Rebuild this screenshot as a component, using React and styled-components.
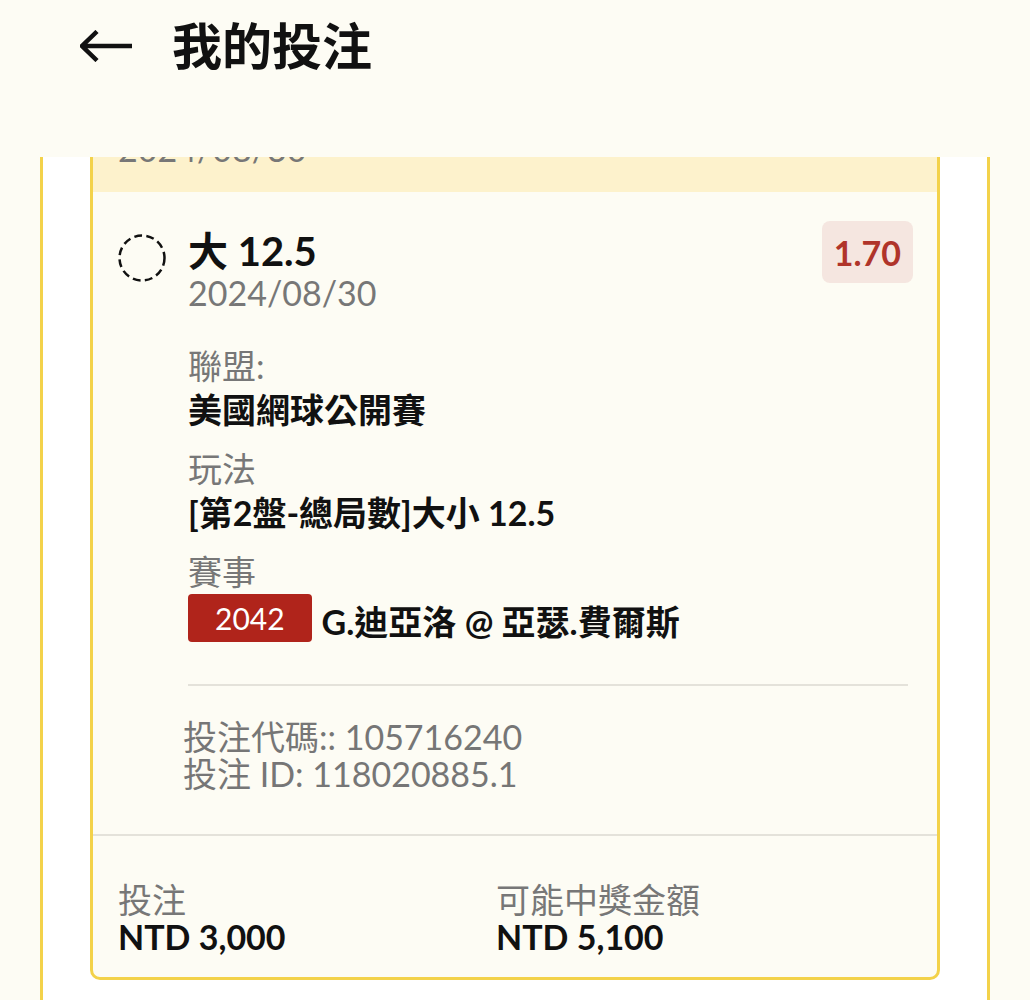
import React from 'react';
import styled, { createGlobalStyle } from 'styled-components';

const GlobalStyle = createGlobalStyle`
    body {
        margin: 0;
        background: #fdfcf4;
        font-family: Lato, "Noto Sans CJK TC", sans-serif;
    }
`;

const Header = styled.header`
    height: 157px;
    box-sizing: border-box;
    padding-left: 80px;
    background: #fdfcf4;
`;

const HeaderRow = styled.div`
    height: 92px;
    display: flex;
    align-items: center;
    gap: 40px;
`;

const BackButton = styled.button`
    border: 0;
    background: none;
    padding: 0;
    width: 52px;
    height: 32px;
    display: flex;
    cursor: pointer;
`;

const Title = styled.h1`
    margin: 0;
    font-size: 50px;
    font-weight: 700;
    line-height: 92px;
    color: #111;
`;

const Viewport = styled.main`
    height: 843px;
    overflow: hidden;
`;

const Panel = styled.section`
    margin: -81px 40px 0;
    background: #fff;
    border: 3px solid #f3d24a;
    padding: 30px 47px;
`;

const Card = styled.article`
    border: 3px solid #f3d24a;
    border-radius: 10px;
    background: #fdfcf4;
    overflow: hidden;
`;

const CardHead = styled.div`
    background: #fdf2cc;
    padding: 16px 25px 22px;
    font-size: 34px;
    line-height: 42px;
    color: #777;
`;

const CardBody = styled.div`
    padding: 29px 24px 42px 25px;
`;

const TopRow = styled.div`
    display: flex;
    align-items: flex-start;
`;

const Radio = styled.div`
    width: 48px;
    height: 48px;
    flex-shrink: 0;
    margin: 13px 22px 0 0;
    display: flex;
`;

const Selection = styled.div`
    flex: 1;
    margin-top: 7px;
`;

const Pick = styled.div`
    font-size: 40px;
    font-weight: 700;
    line-height: 46px;
    color: #111;
`;

const DateText = styled.div`
    font-size: 34px;
    line-height: 38px;
    color: #777;
`;

const Odds = styled.div`
    height: 62px;
    padding: 0 12px;
    display: flex;
    align-items: center;
    background: #f5e6e0;
    color: #b0342a;
    border-radius: 8px;
    font-size: 34px;
    font-weight: 700;
`;

const Details = styled.div`
    padding-left: 70px;
    margin-top: 32px;
`;

const Fields = styled.div`
    display: flex;
    flex-direction: column;
    gap: 15px;
`;

const Field = styled.div`
    font-size: 34px;
    line-height: 44px;
`;

const Label = styled.div`
    color: #777;
`;

const Value = styled.div`
    font-weight: 700;
    color: #111;
`;

const MatchRow = styled.div`
    display: flex;
    align-items: flex-start;
    gap: 10px;
`;

const EventNo = styled.span`
    height: 48px;
    padding: 0 27px;
    display: flex;
    align-items: center;
    background: #b0241b;
    color: #fff;
    border-radius: 4px;
    font-size: 30px;
`;

const MatchName = styled.span`
    margin-top: 6px;
    font-weight: 700;
    color: #111;
`;

const Divider = styled.hr`
    border: 0;
    height: 2px;
    background: #e4e2da;
    margin: 40px 5px 0 0;
`;

const Codes = styled.div`
    margin: 32px 0 0 -5px;
    font-size: 34px;
    line-height: 37px;
    color: #767676;
`;

const Footer = styled.div`
    border-top: 2px solid #e4e2da;
    padding: 45px 25px 22px;
    display: grid;
    grid-template-columns: 378px 1fr;
`;

const Amount = styled.div`
    font-size: 34px;
    line-height: 37px;
`;

const ArrowLeft = () => (
    <svg width="52" height="32" viewBox="0 0 52 32" fill="none">
        <path d="M2 16H52M17 1.5L2 16L17 30.5" stroke="#111" strokeWidth="4.5" />
    </svg>
);

const DashedCircle = () => (
    <svg width="48" height="48" viewBox="0 0 48 48" fill="none">
        <circle cx="24" cy="24" r="22.5" stroke="#111" strokeWidth="2.5" strokeDasharray="7.8 4.4" />
    </svg>
);

const App = () => {
    return (
        <>
            <GlobalStyle />
            <Header>
                <HeaderRow>
                    <BackButton aria-label="back"><ArrowLeft /></BackButton>
                    <Title>我的投注</Title>
                </HeaderRow>
            </Header>
            <Viewport>
                <Panel>
                    <Card>
                        <CardHead>2024/08/30</CardHead>
                        <CardBody>
                            <TopRow>
                                <Radio><DashedCircle /></Radio>
                                <Selection>
                                    <Pick>大 12.5</Pick>
                                    <DateText>2024/08/30</DateText>
                                </Selection>
                                <Odds>1.70</Odds>
                            </TopRow>
                            <Details>
                                <Fields>
                                    <Field>
                                        <Label>聯盟:</Label>
                                        <Value>美國網球公開賽</Value>
                                    </Field>
                                    <Field>
                                        <Label>玩法</Label>
                                        <Value>[第2盤-總局數]大小 12.5</Value>
                                    </Field>
                                    <Field>
                                        <Label>賽事</Label>
                                        <MatchRow>
                                            <EventNo>2042</EventNo>
                                            <MatchName>G.迪亞洛 @ 亞瑟.費爾斯</MatchName>
                                        </MatchRow>
                                    </Field>
                                </Fields>
                                <Divider />
                                <Codes>
                                    <div>投注代碼:: 105716240</div>
                                    <div>投注 ID: 118020885.1</div>
                                </Codes>
                            </Details>
                        </CardBody>
                        <Footer>
                            <Amount>
                                <Label>投注</Label>
                                <Value>NTD 3,000</Value>
                            </Amount>
                            <Amount>
                                <Label>可能中獎金額</Label>
                                <Value>NTD 5,100</Value>
                            </Amount>
                        </Footer>
                    </Card>
                </Panel>
            </Viewport>
        </>
    );
};

export default App;
